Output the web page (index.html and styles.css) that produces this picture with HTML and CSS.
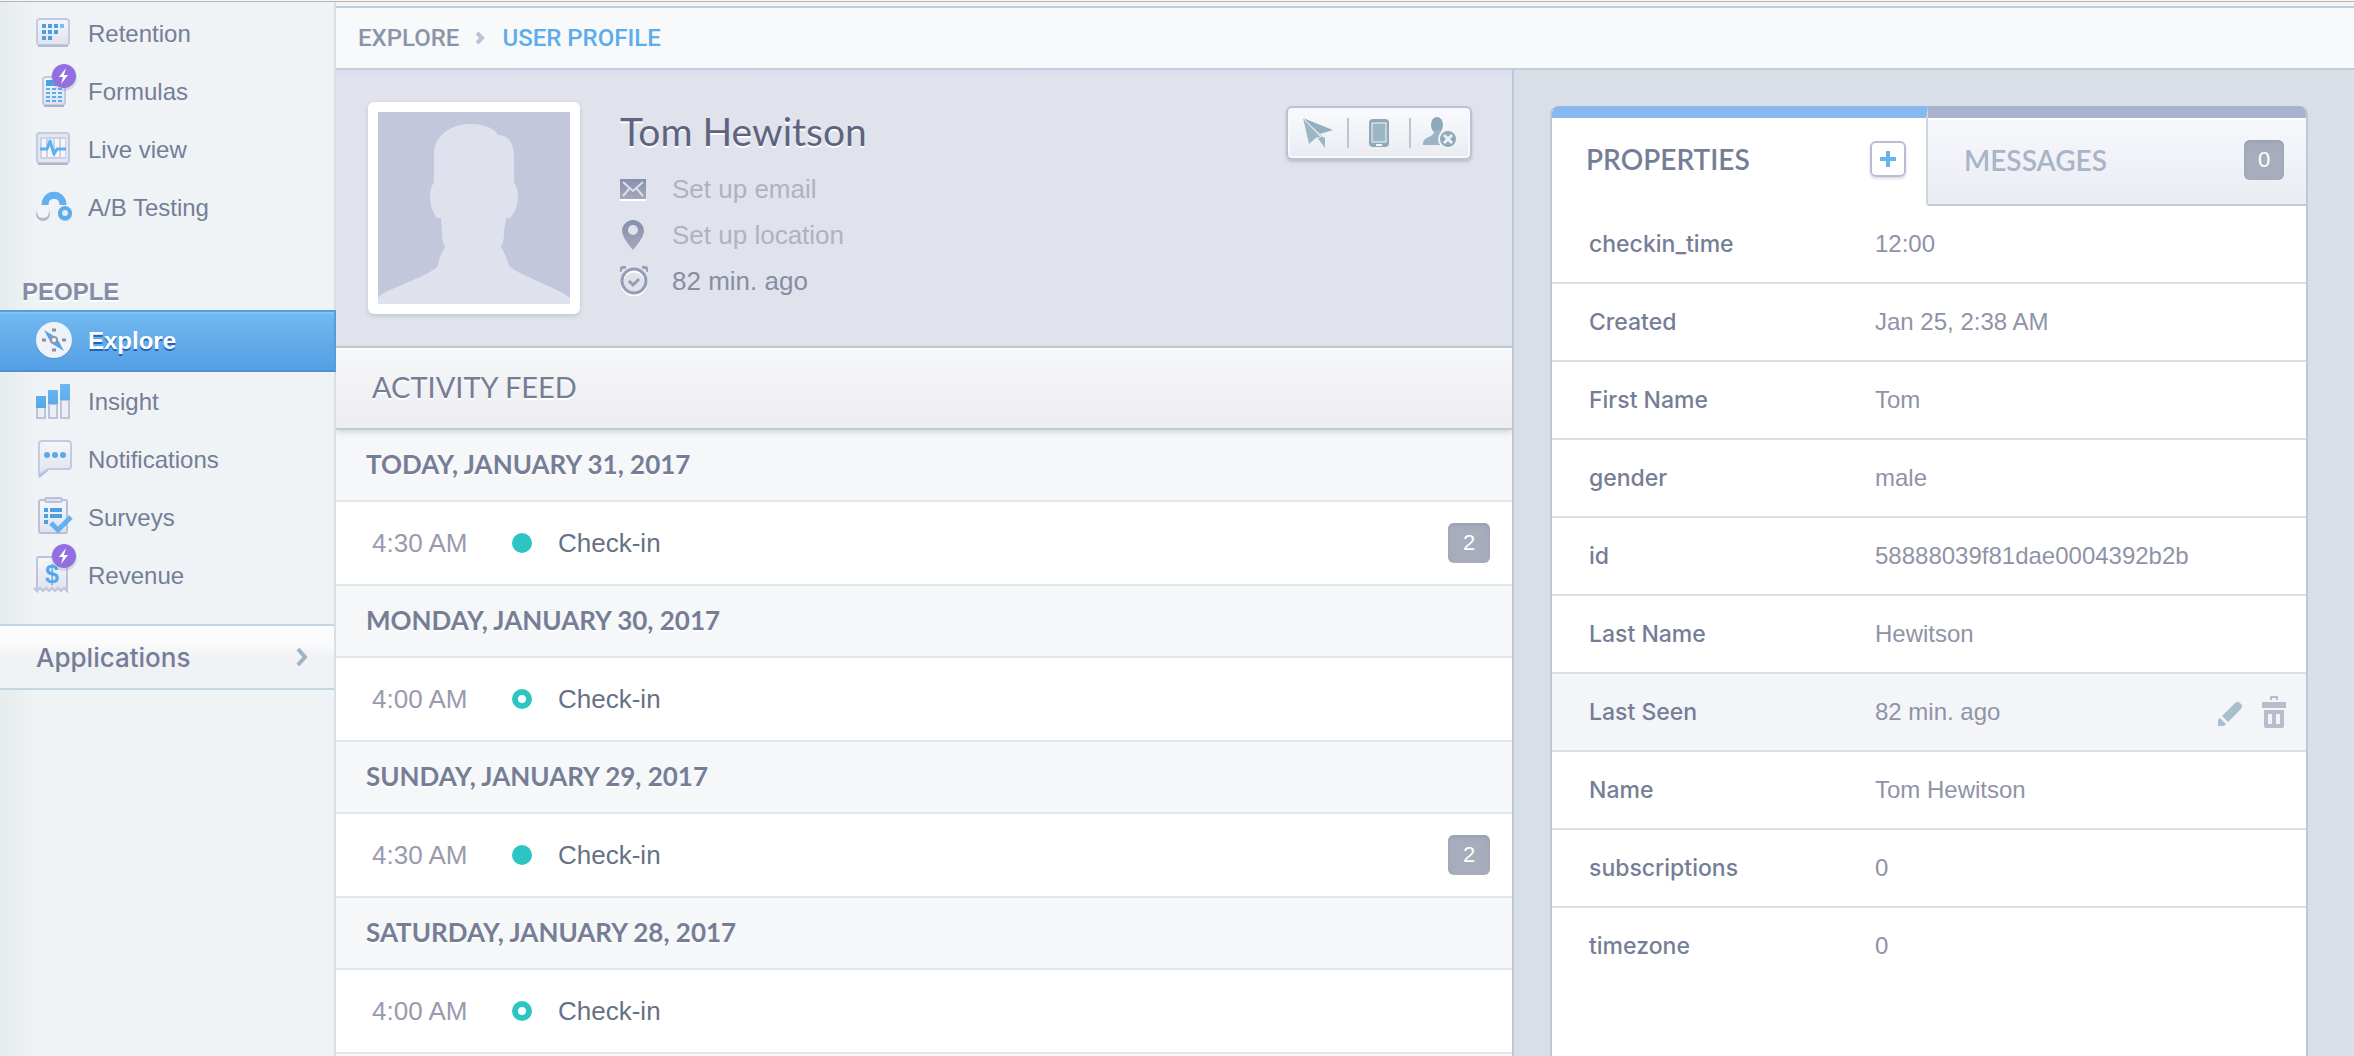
FILE: index.html
```html
<!DOCTYPE html>
<html lang="en">
<head>
<meta charset="utf-8">
<meta name="viewport" content="width=device-width, initial-scale=1">
<title>User profile</title>
<link rel="stylesheet" href="styles.css">
</head>
<body>
<svg class="defs" aria-hidden="true">
  <defs>
    <linearGradient id="paper" x1="0" y1="0" x2="0" y2="1"><stop offset="0" stop-color="#f6f7fc"/><stop offset="1" stop-color="#dfe2ee"/></linearGradient>
    <linearGradient id="blue" x1="0" y1="0" x2="0" y2="1"><stop offset="0" stop-color="#6cbaf2"/><stop offset="1" stop-color="#56a6e8"/></linearGradient>
    <linearGradient id="steel" x1="0" y1="0" x2="0" y2="1"><stop offset="0" stop-color="#8791ab"/><stop offset="1" stop-color="#a3a7bc"/></linearGradient>
    <g id="bolt"><circle cx="0" cy="2" r="13" fill="#8a8fa8" opacity=".25"/><circle r="12" fill="#9370e0"/><path d="M2-8-5 1h4l-2 7 7-9H0z" fill="#fff"/></g>
  </defs>
</svg>
<div class="app">
  <nav class="sidebar" aria-label="Main">
    <ul class="nav-list">
      <li><a class="nav-item" href="#retention">
        <svg class="nav-icon" viewBox="0 0 44 58"><rect x="1" y="14" width="32" height="26" rx="3" fill="url(#paper)" stroke="#c3cbe2" stroke-width="2"/><path d="M2 41h30" stroke="#b3bbd0" stroke-width="2"/><path d="M6 21h4m2 0h4m2 0h4M6 27h4m2 0h4m2 0h4M6 33h4m2 0h4" stroke="#4b9fe2" stroke-width="4"/><path d="M24 21h4" stroke="#7dbcf0" stroke-width="4"/></svg>
        Retention</a></li>
      <li><a class="nav-item" href="#formulas">
        <svg class="nav-icon" viewBox="0 0 44 58"><rect x="7" y="14" width="22" height="28" rx="3" fill="url(#paper)" stroke="#c3cbe2" stroke-width="2"/><path d="M8 43h20" stroke="#aab2c8" stroke-width="2"/><path d="M10 17h16v6H10z" fill="#4f9fe0"/><path d="M10 26h4m2 0h4m2 0h4M10 30h4m2 0h4m2 0h4M10 34h4m2 0h4m2 0h4M10 38h4m2 0h4m2 0h4" stroke="#5aaeee" stroke-width="2"/><use href="#bolt" x="28" y="13"/></svg>
        Formulas</a></li>
      <li><a class="nav-item" href="#live">
        <svg class="nav-icon" viewBox="0 0 44 58"><rect x="1" y="12" width="32" height="30" rx="3" fill="#e4e7f1" stroke="#c3cbe2" stroke-width="2"/><path d="M2 43h30" stroke="#aeb6cc" stroke-width="2"/><path d="M4 16h26v22H4z" fill="#cdd2e3"/><path d="M6 18h4v18H6zm6 0h5v18h-5zm7 0h4v18h-4zm6 0h4v18h-4z" fill="#f5f6fb"/><path d="M4 28h7l3-8 4 13 3-5h9" fill="none" stroke="#5fb0ee" stroke-width="3" stroke-linejoin="round"/></svg>
        Live view</a></li>
      <li><a class="nav-item" href="#ab">
        <svg class="nav-icon" viewBox="0 0 44 58"><path d="M9 26c0-13 18-13 18 0" fill="none" stroke="#63b0ef" stroke-width="7"/><circle cx="7" cy="35" r="7" fill="#b3bbd2"/><circle cx="7" cy="33" r="6" fill="#f4f5fa"/><circle cx="29" cy="35" r="7" fill="#9fb9dc"/><circle cx="29" cy="34" r="5" fill="#e6ecf6" stroke="#5dacee" stroke-width="4"/></svg>
        A/B Testing</a></li>
    </ul>
    <h2 class="nav-heading">PEOPLE</h2>
    <ul class="nav-list nav-people">
      <li><a class="nav-item active" href="#explore" aria-current="page">
        <svg class="nav-icon" viewBox="0 0 44 58"><circle cx="18" cy="29" r="18" fill="#4a90d8"/><circle cx="18" cy="28" r="18" fill="#f0f2f9"/><path d="M16 18h4M16 38h4M6 28h4m16 0h4" stroke="#8b90a8" stroke-width="3"/><path d="M8 18l13 8 7 13-13-8z" fill="#58a4de"/><circle cx="18" cy="28" r="3" fill="#fff" stroke="#8b98ae" stroke-width="2"/></svg>
        Explore</a></li>
      <li><a class="nav-item" href="#insight">
        <svg class="nav-icon" viewBox="0 0 44 58"><path d="M1 34h8v11H1zM13 31h8v14h-8zM25 27h8v18h-8z" fill="#eceef6" stroke="#bcc4da" stroke-width="2"/><path d="M0 23h10v12H0zM12 17h10v14H12zM24 11h10v16H24z" fill="url(#blue)"/></svg>
        Insight</a></li>
      <li><a class="nav-item" href="#notifications">
        <svg class="nav-icon" viewBox="0 0 44 58"><path d="M3 47V13q0-3 3-3h26q3 0 3 3v23q0 3-3 3H13z" fill="#aab2c9"/><path d="M3 44V13q0-3 3-3h26q3 0 3 3v22q0 3-3 3H12z" fill="url(#paper)" stroke="#c3cbe2" stroke-width="2"/><circle cx="11" cy="24" r="3" fill="#5aaae6"/><circle cx="19" cy="24" r="3" fill="#5aaae6"/><circle cx="27" cy="24" r="3" fill="#5aaae6"/></svg>
        Notifications</a></li>
      <li><a class="nav-item" href="#surveys">
        <svg class="nav-icon" viewBox="0 0 44 58"><rect x="3" y="11" width="28" height="33" rx="2" fill="url(#paper)" stroke="#b9c1d8" stroke-width="2"/><rect x="9" y="9" width="17" height="4" rx="2" fill="#dfe2ee" stroke="#b9c1d8" stroke-width="2"/><path d="M8 21h4m2 0h12M8 27h4m2 0h12M8 33h4" stroke="#4b9fe2" stroke-width="4"/><path d="M15 34l7 7 13-13" fill="none" stroke="#63b2f0" stroke-width="5"/></svg>
        Surveys</a></li>
      <li><a class="nav-item" href="#revenue">
        <svg class="nav-icon" viewBox="0 0 44 58"><path d="M1 44V12q0-2 2-2h26q2 0 2 2v32l-3-3-3 3-3-3-3 3-3-3-3 3-3-3-3 3-3-3-3 3-3-3z" fill="url(#paper)" stroke="#bcc4da" stroke-width="2"/><text class="dollar" x="16" y="36" text-anchor="middle">$</text><use href="#bolt" x="28" y="9"/></svg>
        Revenue</a></li>
    </ul>
    <button class="applications" type="button">Applications
      <svg width="12" height="18" viewBox="0 0 12 18"><path d="M2 1l7 8-7 8" fill="none" stroke="#9fb3c2" stroke-width="4"/></svg>
    </button>
  </nav>

  <div class="main">
    <nav class="breadcrumb" aria-label="Breadcrumb">
      <a href="#explore">EXPLORE</a>
      <svg width="9" height="14" viewBox="0 0 9 14"><path d="M1 2l5 5-5 5" fill="none" stroke="#b9c2d9" stroke-width="4"/></svg>
      <a class="current" href="#profile">USER PROFILE</a>
    </nav>
    <div class="content">
      <main class="feed">
        <section class="profile">
          <div class="avatar">
            <svg viewBox="0 0 192 192" role="img" aria-label="Profile photo placeholder"><path fill="#c3c7dc" d="M0 0h192v192H0z"/><path fill="#dfe2ed" d="M0 192v-6c4-5 8-6 12-8l28-12c9-4 16-8 20-12 1-8 4-14 7-19-3-6-3-10-3-15l-1-14h-4c-3-3-7-13-7-21 0-8 2-11 4-15V38c2-14 17-27 38-26 12 0 22 4 26 11 11 0 16 9 16 22v25c2 4 4 8 4 15 0 8-4 18-8 21h-4l-2 15c0 6-1 10-3 14 4 6 6 12 8 19 6 5 15 9 24 13l26 12c5 2 8 5 11 7v6z"/></svg>
          </div>
          <div class="identity">
            <h1>Tom Hewitson</h1>
            <ul class="facts">
              <li><svg width="28" height="30" viewBox="0 0 28 30"><path d="M0 25h26v2H0z" fill="#fff"/><path d="M0 5h26v20H0z" fill="url(#steel)"/><path d="M3 8l10 9L23 8M3 22l7-8m6 0l7 8" fill="none" stroke="#dde0ea" stroke-width="2"/></svg><a href="#email">Set up email</a></li>
              <li><svg width="28" height="30" viewBox="0 0 28 30"><path fill="url(#steel)" fill-rule="evenodd" d="M13 0c6 0 11 5 11 11 0 5-6 13-11 19C8 24 2 16 2 11 2 5 7 0 13 0zm0 5a5 5 0 1 0 0 10 5 5 0 0 0 0-10z"/></svg><a href="#location">Set up location</a></li>
              <li><svg width="28" height="30" viewBox="0 0 28 30"><circle cx="14" cy="17" r="12" fill="none" stroke="#fff" stroke-width="3"/><circle cx="14" cy="15" r="12" fill="none" stroke="#949db5" stroke-width="3"/><path d="M0 6c0-4 2-5 6-5M28 6c0-4-2-5-6-5" fill="none" stroke="#949db5" stroke-width="3"/><path d="M9 15l4 4 6-6" fill="none" stroke="#949db5" stroke-width="3"/></svg><span>82 min. ago</span></li>
            </ul>
          </div>
          <div class="toolbar">
            <button type="button" aria-label="Send message"><svg width="30" height="30" viewBox="0 0 30 30"><path fill="#94afbf" d="M0 0l30 12-13 4z"/><path fill="#9db6c4" d="M0 0l6 26 9-8zM0 0l22 30V20l-5-3z"/><path d="M0 0l17 18" stroke="#eef1f6"/><path d="M15 20l8-4" stroke="#eef1f6"/></svg></button>
            <button type="button" aria-label="Mobile"><svg width="22" height="30" viewBox="0 0 22 30"><rect x="1" y="1" width="20" height="28" rx="4" fill="#8ea9ba"/><rect x="4" y="5" width="14" height="19" fill="#9db6c4" stroke="#f4f6fa" stroke-width="1"/><path d="M8 27h6" stroke="#f4f6fa" stroke-width="2"/></svg></button>
            <button type="button" aria-label="Remove user"><svg width="34" height="32" viewBox="0 0 34 32"><ellipse cx="14" cy="8" rx="6" ry="8" fill="#8ea9ba"/><path fill="#9bb4c3" d="M0 28c0-6 3-7 8-9l3-3v-3h7v4l6 11z"/><circle cx="25" cy="22" r="9" fill="#8ea9ba" stroke="#f1f3f8" stroke-width="2"/><path d="M21 18l8 8m0-8l-8 8" stroke="#eef1f6" stroke-width="3"/></svg></button>
          </div>
        </section>
        <h2 class="feed-title">ACTIVITY FEED</h2>
        <section><h3 class="day">TODAY, JANUARY 31, 2017</h3>
          <div class="event"><time>4:30 AM</time><i class="dot"></i><span class="event-name">Check-in</span><span class="badge">2</span></div></section>
        <section><h3 class="day">MONDAY, JANUARY 30, 2017</h3>
          <div class="event"><time>4:00 AM</time><i class="dot ring"></i><span class="event-name">Check-in</span></div></section>
        <section><h3 class="day">SUNDAY, JANUARY 29, 2017</h3>
          <div class="event"><time>4:30 AM</time><i class="dot"></i><span class="event-name">Check-in</span><span class="badge">2</span></div></section>
        <section><h3 class="day">SATURDAY, JANUARY 28, 2017</h3>
          <div class="event"><time>4:00 AM</time><i class="dot ring"></i><span class="event-name">Check-in</span></div></section>
      </main>
      <aside class="side">
        <div class="panel">
          <div class="tabs">
            <div class="tab selected"><button class="tab-label" type="button">PROPERTIES</button>
              <button class="add" type="button" aria-label="Add property"><svg width="16" height="16" viewBox="0 0 16 16"><path d="M8 0v16M0 8h16" stroke="#68b4ee" stroke-width="4"/></svg></button></div>
            <div class="tab"><button class="tab-label" type="button">MESSAGES</button><span class="badge">0</span></div>
          </div>
          <table class="props">
            <tr><th scope="row">checkin_time</th><td>12:00</td></tr>
            <tr><th scope="row">Created</th><td>Jan 25, 2:38 AM</td></tr>
            <tr><th scope="row">First Name</th><td>Tom</td></tr>
            <tr><th scope="row">gender</th><td>male</td></tr>
            <tr><th scope="row">id</th><td>58888039f81dae0004392b2b</td></tr>
            <tr><th scope="row">Last Name</th><td>Hewitson</td></tr>
            <tr class="hovered"><th scope="row">Last Seen</th><td><div class="cell">82 min. ago
              <span class="actions">
                <button type="button" aria-label="Edit"><svg width="24" height="32" viewBox="0 0 24 32"><path fill="#a9bfce" d="M17 7q3-2 5 0l1 1q2 2 0 5L10 26l-6-6zM2 22l6 6-2 2H0v-6z"/></svg></button>
                <button type="button" aria-label="Delete"><svg width="24" height="32" viewBox="0 0 24 32"><path fill="#b9bccc" fill-rule="evenodd" d="M8 4V1q0-1 1-1h6q1 0 1 1v3h-2V2h-4v2zM0 6h24v6H0zM2 14h20v16q0 2-2 2H4q-2 0-2-2zm4 4v10h4V18zm8 0v10h4V18z"/></svg></button>
              </span></div></td></tr>
            <tr><th scope="row">Name</th><td>Tom Hewitson</td></tr>
            <tr><th scope="row">subscriptions</th><td>0</td></tr>
            <tr><th scope="row">timezone</th><td>0</td></tr>
          </table>
        </div>
      </aside>
    </div>
  </div>
</div>
</body>
</html>
```
FILE: styles.css
```css
* { box-sizing: border-box; }
body, h1, h2, h3, ul { margin: 0; padding: 0; }
ul { list-style: none; }
a { color: inherit; text-decoration: none; }
button { margin: 0; padding: 0; border: 0; background: none; font: inherit; color: inherit; cursor: pointer; }
svg { display: block; flex: none; }
body {
  font: 24px "Liberation Sans", Arial, sans-serif;
  color: #757e96;
  background: #f4f5f5;
}
.defs { position: absolute; width: 0; height: 0; }

.app {
  display: flex;
  height: 100vh;
  overflow: hidden;
  padding-top: 1px;
}

/* Sidebar */
.sidebar {
  flex: none;
  width: 336px;
  padding-top: 3px;
  border-top: 1px solid #b3b5b5;
  background: linear-gradient(to right, #e6ebee, #eff3f6 36px, #eff3f6 334px, #d6dfe7 334px);
}
.nav-item {
  display: flex;
  align-items: center;
  gap: 8px;
  height: 58px;
  padding-left: 36px;
}
.nav-icon { width: 44px; height: 58px; overflow: visible; }
.nav-heading {
  height: 73px;
  padding: 35px 0 0 22px;
  font-size: 24px;
  line-height: 40px;
  color: #858da6;
  text-shadow: 0 2px 0 #fff;
}
.nav-item.active {
  height: 62px;
  margin-bottom: 1px;
  border: 2px solid;
  border-color: #519fdf #519fdf #4b90d6 transparent;
  border-left: 0;
  background: linear-gradient(#72b9ef, #549fe5);
  box-shadow: inset 0 2px 0 #84c3f1;
  color: #fff;
  font-weight: bold;
  text-shadow: 0 2px 0 #1c62be;
}
.dollar { font: bold 25px "Liberation Sans", Arial, sans-serif; fill: #55a8ea; }
.applications {
  display: flex;
  align-items: center;
  justify-content: space-between;
  width: 334px;
  height: 66px;
  margin-top: 19px;
  padding: 0 26px 0 36px;
  border-top: 2px solid #c5d6e0;
  border-bottom: 2px solid #c5d6e0;
  background: linear-gradient(#fdfdfd, #fafafb 30%, #f1f2f6 50%, #f0f1f5);
  font-family: Inter, "Liberation Sans", sans-serif;
  font-size: 26px;
  font-weight: 500;
}

/* Header */
.main {
  display: flex;
  flex-direction: column;
  flex: 1;
  min-width: 0;
  border-top: 1px solid #b3b5b5;
}
.breadcrumb {
  display: flex;
  align-items: center;
  gap: 17px;
  height: 64px;
  margin-top: 4px;
  padding-left: 22px;
  border-top: 2px solid #bfd0dc;
  border-bottom: 2px solid #bfd0dc;
  background: #f7f9fb;
  font-family: Roboto, sans-serif;
  font-size: 24px;
  font-weight: 500;
  color: #8c94aa;
}
.breadcrumb .current { color: #5eace8; }

.content { display: flex; flex: 1; min-height: 0; background: #d8dfe6; }
.feed {
  flex: 1;
  min-width: 0;
  overflow: hidden;
  border-right: 2px solid #bfc7d6;
  background: #f5f7f9;
}
.side { flex: none; width: 840px; padding: 36px 46px 0 36px; }

/* Profile */
.profile {
  display: flex;
  align-items: flex-start;
  height: 278px;
  padding: 32px 40px 0 32px;
  border-bottom: 2px solid #bfcdd9;
  background: linear-gradient(#dbdee8, #e0e3ec 8px);
}
.avatar {
  flex: none;
  width: 212px;
  height: 212px;
  padding: 10px;
  border-radius: 6px;
  background: #fff;
  box-shadow: 0 2px 4px rgba(120, 125, 150, .3);
}
.identity { flex: 1; padding: 4px 0 0 40px; }
h1 {
  font: 400 39px/50px Lato, sans-serif;
  color: #5e6480;
  text-shadow: 0 2px 0 #fff;
}
.facts { padding-top: 10px; font-size: 26px; color: #888da2; }
.facts li { display: flex; align-items: center; gap: 24px; height: 46px; }
.facts a { color: #afb2c2; }
.toolbar {
  display: flex;
  align-items: center;
  width: 186px;
  height: 54px;
  margin-top: 4px;
  border: 2px solid #b9c3d2;
  border-radius: 6px;
  background: linear-gradient(#fafbfe, #e9ebf1);
  box-shadow: 0 2px 3px rgba(130, 140, 165, .4), inset 0 0 0 2px #f8f9fc;
}
.toolbar button {
  display: flex;
  flex: 1;
  align-items: center;
  justify-content: center;
  height: 30px;
}
.toolbar button + button { border-left: 2px solid #bcc6d2; }

/* Feed */
.feed-title {
  position: relative;
  height: 82px;
  padding-left: 36px;
  border-bottom: 2px solid #bfccd5;
  background: linear-gradient(#f6f7f8, #ededf2);
  box-shadow: inset 0 2px 0 #fff, 0 2px 6px rgba(100, 105, 120, .25);
  font: 400 29px/78px Lato, sans-serif;
  text-shadow: 0 2px 0 #fff;
}
.day {
  height: 72px;
  padding-left: 30px;
  border-bottom: 2px solid #dde7ec;
  font: 700 26px/68px Lato, sans-serif;
  text-shadow: 0 2px 0 #fff;
}
.event {
  display: flex;
  align-items: center;
  height: 84px;
  padding: 0 22px 0 36px;
  border-bottom: 2px solid #dde7ec;
  background: #fff;
  font-size: 26px;
}
.event time { width: 140px; color: #989bae; }
.event-name { flex: 1; padding-left: 26px; color: #657185; }
.dot { width: 20px; height: 20px; border-radius: 50%; background: #2cc5c4; }
.ring { border: 6px solid #2cc5c4; background: #fff; }
.badge {
  min-width: 40px;
  height: 40px;
  border-radius: 6px;
  background: #a7adbc;
  box-shadow: inset 0 2px 4px #98a0ae;
  color: #fff;
  font-size: 22px;
  line-height: 40px;
  text-align: center;
}
.event .badge { width: 42px; }

/* Properties panel */
.panel {
  height: 100%;
  border: 2px solid #c0c6d6;
  border-top: 0;
  border-bottom: 0;
  border-radius: 8px 8px 0 0;
  background: #fff;
  overflow: hidden;
}
.tabs { display: flex; }
.tab {
  display: flex;
  flex: 1;
  align-items: center;
  justify-content: space-between;
  height: 100px;
  padding: 0 22px 2px 36px;
  border-top: 12px solid #a9b3cf;
  border-bottom: 2px solid #c0cdd8;
  background: linear-gradient(#fff 2px, #f6f8fc 2px, #ebecf2);
  box-shadow: inset 0 2px 0 #fff;
  font-family: Lato, sans-serif;
  font-size: 28px;
  font-weight: 600;
  color: #aab4c9;
}
.tab.selected {
  padding: 0 20px 4px 34px;
  border-top-color: #89b8f1;
  border-bottom-color: #fff;
  border-right: 2px solid #cdd6e0;
  background: #fff;
  color: #757e96;
}
.tab .badge { font-family: "Liberation Sans", Arial, sans-serif; font-weight: 400; }
.add {
  display: flex;
  align-items: center;
  justify-content: center;
  width: 36px;
  height: 36px;
  border: 2px solid #bcbcd0;
  border-radius: 6px;
  box-shadow: 0 2px 3px rgba(120, 120, 150, .25);
}
.props { width: 100%; border-collapse: separate; border-spacing: 0; }
.props tr { height: 78px; }
.props th, .props td { padding: 0; border-bottom: 2px solid #dcdee6; text-align: left; }
.props th {
  width: 323px;
  padding-left: 37px;
  font-family: Inter, "Liberation Sans", sans-serif;
  font-size: 23px;
  font-weight: 500;
}
.props td { color: #8f93a7; }
.props tr:last-child > * { border-bottom-color: transparent; }
.hovered { background: #f4f5f9; }
.cell { display: flex; justify-content: space-between; align-items: center; padding-right: 20px; }
.actions { display: flex; gap: 20px; }
```
